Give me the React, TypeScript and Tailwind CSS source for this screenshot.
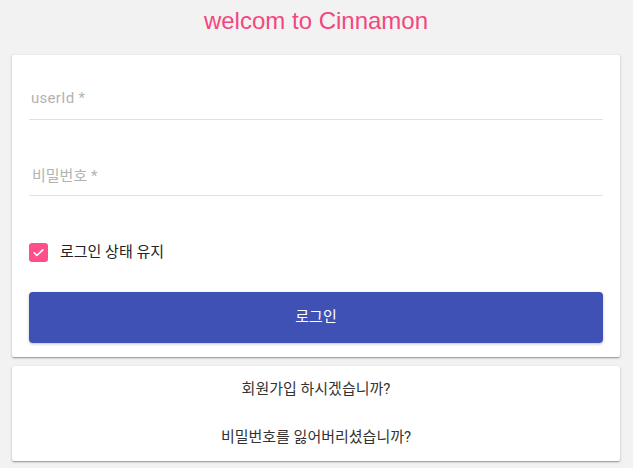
export default function App() {
  return (
    <div className="min-h-[468px] w-full bg-[#f2f2f2] pl-[12px] pr-[13px] font-['Roboto','Noto_Sans_CJK_KR',sans-serif]">
      <h1 className="pt-[6px] h-[55px] text-center font-['Liberation_Sans',sans-serif] text-[24px] leading-[30px] text-[#f2477e]">
        welcom to Cinnamon
      </h1>

      <div className="rounded-[2px] bg-white px-[17px] pb-[14px] pt-[25px] shadow-[0_1px_3px_rgba(0,0,0,0.2),0_1px_1px_rgba(0,0,0,0.14),0_2px_1px_-1px_rgba(0,0,0,0.12)]">
        <div className="flex h-[40px] items-end border-b border-[#e0e0e0] pb-[10px] pl-[2px] text-[15px] tracking-[0.3px] text-[#b3b3b3]">
          userId *
        </div>
        <div className="mt-[36px] flex h-[40px] items-end border-b border-[#e0e0e0] pb-[8px] pl-[3px] text-[15px] text-[#b3b3b3]">
          비밀번호 *
        </div>

        <label className="mt-[45px] flex items-center gap-[12px]">
          <span className="flex h-[19px] w-[19px] items-center justify-center rounded-[3px] bg-[#ff4f8b]">
            <svg width="13" height="13" viewBox="0 0 24 24" fill="none" stroke="white" strokeWidth="3" strokeLinecap="round" strokeLinejoin="round">
              <path d="M4 12.5l5 5L20 7" />
            </svg>
          </span>
          <span className="text-[15px] text-[#222]">로그인 상태 유지</span>
        </label>

        <button className="mt-[28px] flex h-[51px] w-full items-center justify-center rounded-[4px] bg-[#3f51b5] text-[15px] text-white shadow-[0_1px_3px_rgba(0,0,0,0.25)]">
          로그인
        </button>
      </div>

      <div className="mt-[9px] flex flex-col items-center rounded-[2px] bg-white pb-[11px] pt-[12px] text-[15px] text-[#333] shadow-[0_1px_3px_rgba(0,0,0,0.2),0_1px_1px_rgba(0,0,0,0.14),0_2px_1px_-1px_rgba(0,0,0,0.12)]">
        <div className="flex h-[24px] items-center">회원가입 하시겠습니까?</div>
        <div className="mt-[24px] flex h-[24px] items-center">비밀번호를 잃어버리셨습니까?</div>
      </div>
    </div>
  );
}
